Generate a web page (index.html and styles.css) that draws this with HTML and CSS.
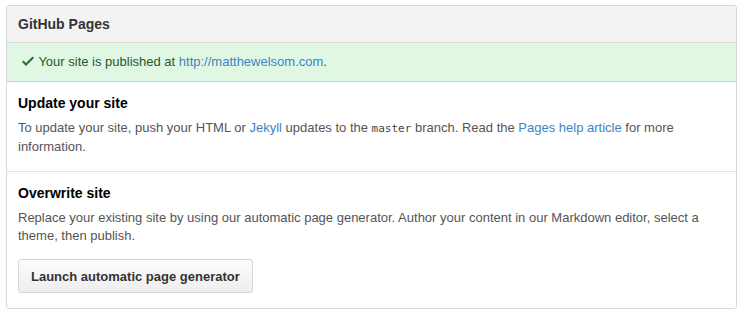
FILE: index.html
```html
<html lang="en">
  <head>
    <meta charset="UTF-8" />
    <title>GitHub Pages</title>
    <link rel="stylesheet" href="styles.css">
  </head>
  <body>
    <div class="boxed">
      <div class="boxed-header">
        <h3>GitHub Pages</h3>
      </div>

      <div class="flash-success">
        <svg class="check" width="12" height="16" viewBox="0 0 12 16">
          <path d="M12 5l-8 8-4-4 1.5-1.5L4 10l6.5-6.5L12 5z" />
        </svg>
        Your site is published at <a href="#">http://matthewelsom.com</a>.
      </div>

      <div class="boxed-group">
        <h4>Update your site</h4>
        <p>
          To update your site, push your HTML or <a href="#">Jekyll</a> updates to the
          <code>master</code> branch. Read the <a href="#">Pages help article</a> for more
          information.
        </p>
      </div>

      <div class="boxed-group">
        <h4>Overwrite site</h4>
        <p>
          Replace your existing site by using our automatic page generator. Author your
          content in our Markdown editor, select a theme, then publish.
        </p>
        <button class="btn">Launch automatic page generator</button>
      </div>
    </div>
  </body>
</html>
```

FILE: styles.css
```css
body {
  margin: 5px 7px 0 6px;
  background: white;
  font-family: "Liberation Sans", Arial, sans-serif;
  font-size: 13px;
  color: #333;
}
a {
  color: #4183c4;
  text-decoration: none;
}
.boxed {
  border: 1px solid #d8d8d8;
  border-radius: 3px;
  overflow: hidden;
}
.boxed-header {
  background: #f3f3f3;
  padding: 8px 11px;
  border-bottom: 1px solid #d8d8d8;
}
.boxed-header h3 {
  margin: 0;
  font-size: 14px;
  line-height: 20px;
  color: #333;
}
.flash-success {
  background: #e0f7e3;
  color: #29572e;
  padding: 10px 15px;
  line-height: 18px;
  border-bottom: 1px solid #c4d8c6;
}
.flash-success .check {
  fill: #2c6e34;
  width: 12px;
  height: 16px;
  vertical-align: -3px;
  margin-right: 1px;
}
.boxed-group {
  padding: 11px 11px 15px;
}
.boxed-group + .boxed-group {
  border-top: 1px solid #e3e3e3;
}
.boxed-group h4 {
  margin: 0;
  font-size: 14px;
  line-height: 20px;
  color: #000;
}
.boxed-group p {
  margin: 6px 0 0;
  line-height: 18px;
  color: #555;
}
code {
  font-family: "DejaVu Sans Mono", "Liberation Mono", monospace;
  font-size: 11px;
  color: #444;
}
.btn {
  margin-top: 14px;
  padding: 0 12px;
  height: 34px;
  font-family: inherit;
  font-size: 13px;
  font-weight: bold;
  color: #333;
  background: linear-gradient(#fcfcfc, #eee);
  border: 1px solid #d5d5d5;
  border-radius: 3px;
  cursor: pointer;
}
```
